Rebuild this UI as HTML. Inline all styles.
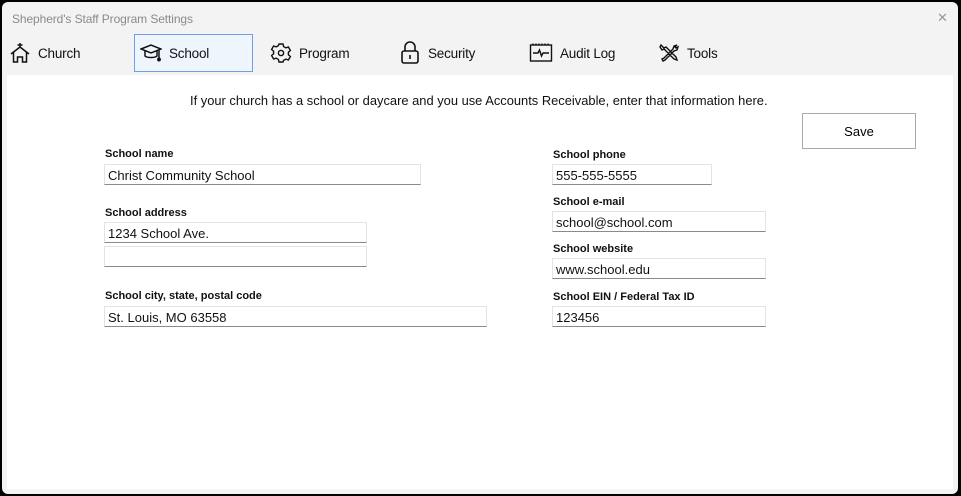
<!DOCTYPE html>
<html><head><meta charset="utf-8"><style>
*{box-sizing:border-box;margin:0;padding:0}
body{width:961px;height:496px;background:#000;font-family:"Liberation Sans",Arial,sans-serif;overflow:hidden;position:relative}
.win{position:absolute;left:2px;top:2px;width:956px;height:492px;background:#f3f3f3;border-radius:6px;overflow:hidden}
.title{position:absolute;left:10px;top:10px;font-size:12px;color:#8a8a8a;letter-spacing:-0.1px}
.close{position:absolute;left:935px;top:8px;font-size:13px;color:#999}
.tab{position:absolute;top:34px;height:38px;display:flex;align-items:center;font-size:13.5px;color:#111;letter-spacing:-0.2px}
.tab svg{margin-right:7px}
.sel{background:#eef5fd;border:1px solid #6f9fe6}
.content{position:absolute;left:7px;top:75px;width:946px;height:414px;background:#fff}
.t{position:absolute;font-size:12.9px;color:#111}
.lbl{position:absolute;font-size:11px;font-weight:bold;color:#111}
.inp{position:absolute;height:21px;border:1px solid #e3e3e3;border-bottom:1px solid #8a8a8a;font-size:13px;padding:3px 0 0 3px;color:#111;background:#fff}
.btn{position:absolute;left:802px;top:113px;width:114px;height:36px;border:1px solid #aaa;background:#fff;font-size:13px;display:flex;align-items:center;justify-content:center}
</style></head><body>
<div class="win">
<div class="title">Shepherd's Staff Program Settings</div>
<div class="close">✕</div>
</div>
<div class="tab" style="left:9px;width:120px;">
<svg width="22" height="22" viewBox="0 0 22 22" fill="none" stroke="#111" stroke-width="1.5"><path d="M11 1v5M8.5 3h5M2 12l9-7 9 7M4.5 10v10h4v-5h5v5h4V10"/></svg>Church</div>
<div class="tab sel" style="left:134px;width:119px;padding-left:5px;">
<svg width="22" height="22" viewBox="0 0 22 22" fill="none" stroke="#111" stroke-width="1.5"><path d="M1 7l10-4 10 4-10 4z M5 9v5c2 2 10 2 12 0V9 M19 8v8"/><circle cx="19" cy="17.5" r="1.2" fill="#111"/></svg>School</div>
<div class="tab" style="left:270px;width:110px;">
<svg width="22" height="22" viewBox="0 0 22 22" fill="none" stroke="#111" stroke-width="1.4"><path d="M9 2h4l.6 2.6 2.3 1.3 2.5-.9 2 3.5-2 1.7v2.6l2 1.7-2 3.5-2.5-.9-2.3 1.3L13 20H9l-.6-2.6-2.3-1.3-2.5.9-2-3.5 2-1.7V9.2l-2-1.7 2-3.5 2.5.9 2.3-1.3z"/><circle cx="11" cy="11" r="2.6"/></svg>Program</div>
<div class="tab" style="left:399px;width:110px;">
<svg width="22" height="24" viewBox="0 0 22 24" fill="none" stroke="#111" stroke-width="1.6"><path d="M6 10V6a5 5 0 0110 0v4"/><rect x="3" y="10" width="16" height="12" rx="2"/><path d="M11 14v4"/></svg>Security</div>
<div class="tab" style="left:529px;width:110px;">
<svg width="24" height="22" viewBox="0 0 24 22" fill="none" stroke="#111" stroke-width="1.4"><rect x="1.5" y="3" width="21" height="16"/><path d="M4 3V1.5M7 3V1.5M10 3V1.5M13 3V1.5M16 3V1.5M19 3V1.5M4 11h5l1.5-3 2 6 1.5-3h6"/></svg>Audit Log</div>
<div class="tab" style="left:658px;width:90px;">
<svg width="22" height="22" viewBox="0 0 22 22" fill="none" stroke="#111" stroke-width="1.4"><path d="M3 3l3 3 2-1 10 10 1 3-3-1L6 7 4 8 2 5zM19 3l-3 1-1 3-9 9-2 1 1 2 2-1 9-9 3-1 1-3-2 1-1-1z"/></svg>Tools</div>
<div class="content"></div>
<div class="t" style="left:190px;top:93px;">If your church has a school or daycare and you use Accounts Receivable, enter that information here.</div>
<div class="btn">Save</div>
<div class="lbl" style="left:105px;top:148px;">School name</div>
<div class="inp" style="left:104px;top:164px;width:317px;">Christ Community School</div>
<div class="lbl" style="left:105px;top:207px;">School address</div>
<div class="inp" style="left:104px;top:222px;width:263px;">1234 School Ave.</div>
<div class="inp" style="left:104px;top:246px;width:263px;"></div>
<div class="lbl" style="left:105px;top:290px;">School city, state, postal code</div>
<div class="inp" style="left:104px;top:306px;width:383px;">St. Louis, MO 63558</div>
<div class="lbl" style="left:553px;top:149px;">School phone</div>
<div class="inp" style="left:552px;top:164px;width:160px;">555-555-5555</div>
<div class="lbl" style="left:553px;top:196px;">School e-mail</div>
<div class="inp" style="left:552px;top:211px;width:214px;">school@school.com</div>
<div class="lbl" style="left:553px;top:243px;">School website</div>
<div class="inp" style="left:552px;top:258px;width:214px;">www.school.edu</div>
<div class="lbl" style="left:553px;top:291px;">School EIN / Federal Tax ID</div>
<div class="inp" style="left:552px;top:306px;width:214px;">123456</div>
</body></html>
